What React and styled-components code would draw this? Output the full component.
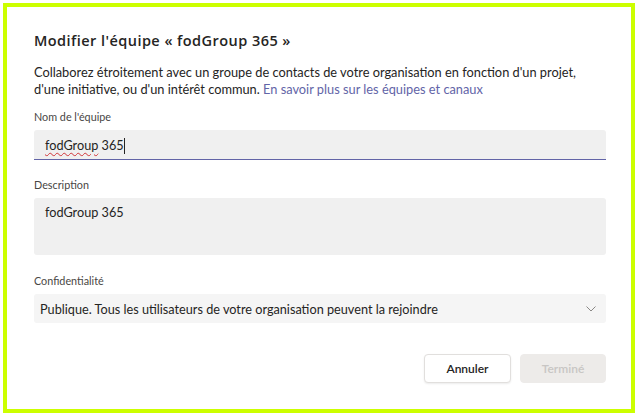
import React from 'react'
import styled, { createGlobalStyle } from 'styled-components'

const Global = createGlobalStyle`
  html, body {
    margin: 0;
    padding: 0;
    background: #ffffff;
    font-family: Lato, "Open Sans", sans-serif;
    color: #252423;
  }
`

const Frame = styled.div`
  box-sizing: border-box;
  width: 632px;
  height: 410px;
  margin: 3px;
  border: 4px solid #ccff00;
  background: #ffffff;
  padding: 24px 25px 0 27px;
  display: flex;
  flex-direction: column;
`

const Title = styled.h1`
  margin: 0;
  font-family: "Open Sans", "Noto Sans", sans-serif;
  font-size: 14.5px;
  line-height: 20px;
  letter-spacing: 0.45px;
  font-weight: 600;
  color: #252423;
`

const Intro = styled.p`
  margin: 13px 0 0;
  font-size: 12.8px;
  line-height: 17px;
  color: #252423;
`

const Link = styled.a`
  color: #6264a7;
  text-decoration: none;
`

const Field = styled.div`
  display: flex;
  flex-direction: column;
  margin-top: ${p => p.$top}px;
`

const Label = styled.label`
  font-size: 10.8px;
  line-height: 14px;
  color: #484644;
  margin-bottom: 6px;
`

const Input = styled.div`
  box-sizing: border-box;
  height: 30px;
  background: #f0f0f0;
  border-radius: 3px 3px 0 0;
  border-bottom: 1px solid #6264a7;
  padding: 1px 11px 0;
  display: flex;
  align-items: center;
  font-size: 12.7px;
`

const Spell = styled.span`
  text-decoration: underline wavy #d13438;
  text-decoration-thickness: 1px;
  text-underline-offset: 2px;
`

const Caret = styled.span`
  display: inline-block;
  width: 1px;
  height: 16px;
  background: #252423;
  vertical-align: -4px;
`

const Area = styled.div`
  box-sizing: border-box;
  height: 57px;
  background: #f0f0f0;
  border-radius: 3px;
  padding: 5px 11px;
  font-size: 12.7px;
  line-height: 18px;
`

const Select = styled.div`
  box-sizing: border-box;
  height: 29px;
  background: #f5f5f5;
  border-radius: 3px;
  padding: 0 10px 0 6px;
  display: flex;
  align-items: center;
  justify-content: space-between;
  font-size: 12.7px;
`

const Actions = styled.div`
  display: flex;
  justify-content: flex-end;
  gap: 9px;
  margin-top: 31px;
`

const Button = styled.button`
  box-sizing: border-box;
  width: ${p => p.$w}px;
  height: 29px;
  border-radius: 4px;
  font-family: inherit;
  font-size: 12px;
  font-weight: 600;
  border: 1px solid ${p => (p.$disabled ? '#edebe9' : '#e1dfdd')};
  background: ${p => (p.$disabled ? '#edebe9' : '#ffffff')};
  color: ${p => (p.$disabled ? '#c8c6c4' : '#252423')};
  box-shadow: ${p => (p.$disabled ? 'none' : '0 1px 2px rgba(0,0,0,0.08)')};
`

const Chevron = () => (
  <svg width="10" height="6" viewBox="0 0 10 6" fill="none">
    <path d="M0.5 0.5 L5 5 L9.5 0.5" stroke="#8a8886" strokeWidth="1" />
  </svg>
)

export default function App () {
  return (
    <>
      <Global />
      <Frame>
        <Title>Modifier l'équipe « fodGroup 365 »</Title>
        <Intro>
          Collaborez étroitement avec un groupe de contacts de votre organisation en fonction d'un projet,<br />
          d'une initiative, ou d'un intérêt commun. <Link>En savoir plus sur les équipes et canaux</Link>
        </Intro>
        <Field $top={12}>
          <Label>Nom de l'équipe</Label>
          <Input><span><Spell>fodGroup</Spell> 365<Caret /></span></Input>
        </Field>
        <Field $top={18}>
          <Label>Description</Label>
          <Area>fodGroup 365</Area>
        </Field>
        <Field $top={19}>
          <Label>Confidentialité</Label>
          <Select>
            Publique. Tous les utilisateurs de votre organisation peuvent la rejoindre
            <Chevron />
          </Select>
        </Field>
        <Actions>
          <Button $w={87}>Annuler</Button>
          <Button $w={86} $disabled>Terminé</Button>
        </Actions>
      </Frame>
    </>
  )
}
